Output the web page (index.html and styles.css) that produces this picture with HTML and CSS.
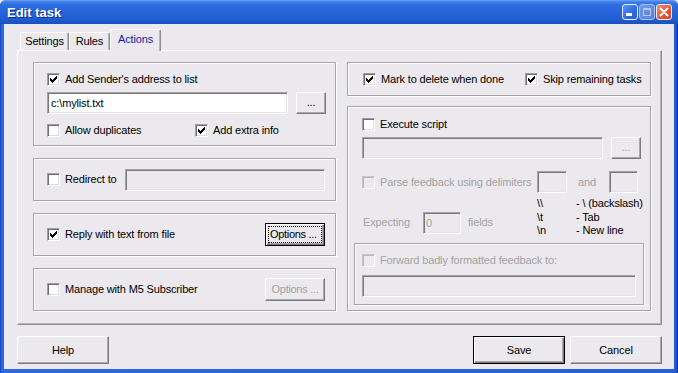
FILE: index.html
```html
<!DOCTYPE html>
<html>
<head>
<meta charset="utf-8">
<link rel="stylesheet" href="styles.css">
</head>
<body>
<div class="window">
  <div class="titlebar">
    <span class="title">Edit task</span>
    <div class="tb-buttons">
      <span class="tb-btn tb-min"><span class="min-bar"></span></span>
      <span class="tb-btn tb-max disabled"><span class="max-box"></span></span>
      <span class="tb-btn tb-close"><svg viewBox="0 0 16 16" width="16" height="16"><path d="M4.5 4.5l7 7M11.5 4.5l-7 7" stroke="#fff" stroke-width="2" stroke-linecap="round"/></svg></span>
    </div>
  </div>
  <div class="client">
    <div class="tabs">
      <div class="tab tab-settings">Settings</div>
      <div class="tab tab-rules">Rules</div>
      <div class="tab tab-actions active">Actions</div>
    </div>
    <div class="page">
      <div class="col col-left">
        <div class="group g-list">
          <div class="row">
            <span class="chk checked"><svg viewBox="0 0 9 9" width="9" height="9" shape-rendering="crispEdges"><path d="M1 3h1v3h-1zM2 4h1v3h-1zM3 5h1v3h-1zM4 4h1v3h-1zM5 3h1v3h-1zM6 2h1v3h-1zM7 1h1v3h-1z"/></svg></span>
            <span class="lbl">Add Sender's address to list</span>
          </div>
          <div class="row row-field">
            <div class="field w-list">c:\mylist.txt</div>
            <div class="btn btn-dots">...</div>
          </div>
          <div class="row">
            <div class="cell-dup">
              <span class="chk"></span>
              <span class="lbl">Allow duplicates</span>
            </div>
            <span class="chk checked"><svg viewBox="0 0 9 9" width="9" height="9" shape-rendering="crispEdges"><path d="M1 3h1v3h-1zM2 4h1v3h-1zM3 5h1v3h-1zM4 4h1v3h-1zM5 3h1v3h-1zM6 2h1v3h-1zM7 1h1v3h-1z"/></svg></span>
            <span class="lbl">Add extra info</span>
          </div>
        </div>
        <div class="group g-small">
          <span class="chk"></span>
          <span class="lbl">Redirect to</span>
          <div class="field w-redirect disabled"></div>
        </div>
        <div class="group g-small">
          <span class="chk checked"><svg viewBox="0 0 9 9" width="9" height="9" shape-rendering="crispEdges"><path d="M1 3h1v3h-1zM2 4h1v3h-1zM3 5h1v3h-1zM4 4h1v3h-1zM5 3h1v3h-1zM6 2h1v3h-1zM7 1h1v3h-1z"/></svg></span>
          <span class="lbl">Reply with text from file</span>
          <div class="btn btn-opt default"><span class="focus">Options ...</span></div>
        </div>
        <div class="group g-small">
          <span class="chk"></span>
          <span class="lbl">Manage with M5 Subscriber</span>
          <div class="btn btn-opt disabled-btn">Options ...</div>
        </div>
      </div>
      <div class="col col-right">
        <div class="group g-mark">
          <div class="cell-mark">
            <span class="chk checked"><svg viewBox="0 0 9 9" width="9" height="9" shape-rendering="crispEdges"><path d="M1 3h1v3h-1zM2 4h1v3h-1zM3 5h1v3h-1zM4 4h1v3h-1zM5 3h1v3h-1zM6 2h1v3h-1zM7 1h1v3h-1z"/></svg></span>
            <span class="lbl">Mark to delete when done</span>
          </div>
          <span class="chk checked"><svg viewBox="0 0 9 9" width="9" height="9" shape-rendering="crispEdges"><path d="M1 3h1v3h-1zM2 4h1v3h-1zM3 5h1v3h-1zM4 4h1v3h-1zM5 3h1v3h-1zM6 2h1v3h-1zM7 1h1v3h-1z"/></svg></span>
          <span class="lbl">Skip remaining tasks</span>
        </div>
        <div class="group g-script">
          <div class="row r-exec">
            <span class="chk"></span>
            <span class="lbl">Execute script</span>
          </div>
          <div class="row r-script">
            <div class="field disabled w-script"></div>
            <div class="btn btn-dots disabled-btn">...</div>
          </div>
          <div class="row r-parse">
            <div class="cell-parse">
              <span class="chk disabled"></span>
              <span class="lbl dim">Parse feedback using delimiters</span>
            </div>
            <div class="field disabled w-delim"></div>
            <span class="lbl dim and">and</span>
            <div class="field disabled w-delim2"></div>
          </div>
          <div class="row r-legend">
            <div class="cell-expect">
              <span class="lbl dim">Expecting</span>
              <div class="field disabled w-expect">0</div>
              <span class="lbl dim">fields</span>
            </div>
            <div class="legend">
              <span class="esc">\\</span><span>- \ (backslash)</span>
              <span class="esc">\t</span><span>- Tab</span>
              <span class="esc">\n</span><span>- New line</span>
            </div>
          </div>
          <div class="group g-forward">
            <div class="row">
              <span class="chk disabled"></span>
              <span class="lbl dim">Forward badly formatted feedback to:</span>
            </div>
            <div class="field disabled w-forward"></div>
          </div>
        </div>
      </div>
    </div>
    <div class="footer">
      <div class="btn btn-foot">Help</div>
      <div class="btn btn-foot default btn-save">Save</div>
      <div class="btn btn-foot">Cancel</div>
    </div>
  </div>
</div>
</body>
</html>
```
FILE: styles.css
```css
* { box-sizing: border-box; }
html, body { margin: 0; padding: 0; }
body {
  width: 678px;
  height: 373px;
  overflow: hidden;
  background: #ebe9ed;
  font-family: "Liberation Sans", Arial, sans-serif;
  font-size: 11px;
  letter-spacing: -0.15px;
  color: #000;
}

.window {
  width: 678px;
  height: 373px;
  display: flex;
  flex-direction: column;
  background: linear-gradient(to right, #0a35b8 0, #2660d8 1px, #2d68df 3px, #2660d8 675px, #0a35b8 678px);
  border-radius: 6px 6px 0 0;
  overflow: hidden;
}

.titlebar {
  height: 24px;
  flex: none;
  display: flex;
  align-items: center;
  padding: 0 6px 0 7px;
  background: linear-gradient(to bottom, #6fa3f2 0, #3c7ee8 2px, #2b6de2 5px, #2764da 12px, #2160d4 18px, #1c55c6 22px, #1a4fbd 24px);
}
.title {
  color: #fff;
  font-family: "Liberation Sans", Arial, sans-serif;
  font-weight: bold;
  font-size: 13px;
  letter-spacing: 0;
  text-shadow: 1px 1px 0 #0a2a8a;
}
.tb-buttons {
  margin-left: auto;
  display: flex;
  gap: 1px;
}
.tb-btn {
  width: 16px;
  height: 16px;
  border: 1px solid #e8eefc;
  border-radius: 3px;
  background: linear-gradient(135deg, #5d95f3 0%, #2d68e0 60%, #2a5fd6 100%);
  display: flex;
  align-items: flex-end;
  justify-content: flex-start;
}
.tb-btn.disabled {
  background: linear-gradient(135deg, #6f9ae8 0%, #5782dc 100%);
  border-color: #a9c0ee;
  align-items: center;
  justify-content: center;
}
.min-bar {
  width: 6px;
  height: 3px;
  background: #fff;
  margin: 0 0 3px 3px;
}
.max-box {
  width: 8px;
  height: 8px;
  border: 1px solid #b6c9f0;
  border-top-width: 2px;
}
.tb-close {
  background: linear-gradient(135deg, #f0906c 0%, #e35a36 55%, #cf4222 100%);
  align-items: center;
  justify-content: center;
}
.tb-close svg { display: block; margin: -1px; }

.client {
  flex: 1;
  margin: 0 4px 4px 4px;
  background: #ebe9ed;
  display: flex;
  flex-direction: column;
}

/* tabs */
.tabs {
  display: flex;
  align-items: flex-end;
  height: 21px;
  margin-top: 5px;
  padding-left: 16px;
}
.tab {
  height: 18px;
  padding-top: 2px;
  text-align: center;
  border-top: 1px solid #fff;
  border-left: 1px solid #fff;
  border-right: 1px solid #8e8e8e;
  box-shadow: inset -1px 0 #b8b8b8;
  border-radius: 2px 2px 0 0;
  background: #ebe9ed;
}
.tab-settings { width: 49px; }
.tab-rules { width: 41px; }
.tab-actions {
  width: 51px;
  height: 22px;
  margin-bottom: -1px;
  padding-top: 3px;
  color: #1b1ba6;
  position: relative;
  z-index: 1;
}

.page {
  margin-left: 13px;
  width: 645px;
  height: 275px;
  border-top: 1px solid #fff;
  border-left: 1px solid #fff;
  border-right: 1px solid #8e8e8e;
  border-bottom: 1px solid #8e8e8e;
  box-shadow: inset -1px -1px #b4b4b4;
  padding: 11px 0 0 15px;
  display: flex;
  gap: 11px;
  align-items: flex-start;
}

.col { display: flex; flex-direction: column; }
.col-left { width: 303px; gap: 12px; }
.col-right { width: 304px; gap: 10px; }

.group {
  border: 1px solid #a5a5a5;
  box-shadow: inset 1px 1px #fff, 1px 1px 0 #fff;
}

.row { display: flex; align-items: center; }

.chk {
  width: 13px;
  height: 13px;
  flex: none;
  background: #fff;
  border: 1px solid;
  border-color: #a0a0a0 #fff #fff #a0a0a0;
  box-shadow: inset 1px 1px #6f6f6f, inset -1px -1px #dcdcdc;
  display: flex;
  align-items: center;
  justify-content: center;
}
.chk svg { display: block; fill: #000; }
.chk.disabled { background: #ebe9ed; border-color: #c4c4c4 #fff #fff #c4c4c4; box-shadow: inset 1px 1px #b8b8b8; }
.lbl { margin-left: 5px; white-space: nowrap; line-height: 13px; }
.dim { color: #a3a3a3; }

.field {
  height: 22px;
  background: #fff;
  border: 1px solid;
  border-color: #a3a3a3 #fff #fff #a3a3a3;
  box-shadow: inset 1px 1px #7a7a7a, inset -1px -1px #e4e4e4;
  padding: 4px 0 0 3px;
  line-height: 13px;
  white-space: nowrap;
}
.field.disabled { background: #ebe9ed; color: #a3a3a3; }

.btn {
  background: #ebe9ed;
  border: 1px solid;
  border-color: #fff #7a7a7a #7a7a7a #fff;
  box-shadow: inset -1px -1px #a8a8a8;
  display: flex;
  align-items: center;
  justify-content: center;
  line-height: 13px;
  white-space: nowrap;
}
.btn.default {
  border-color: #000;
  box-shadow: inset 1px 1px #fff, inset -1px -1px #7a7a7a, inset -2px -2px #a8a8a8;
}
.disabled-btn { color: #a3a3a3; }
.btn-opt { letter-spacing: -0.3px; }
.focus {
  flex: none;
  border: 1px dotted #000;
  padding: 1px 0 0 1px;
  height: 17px;
  width: 54px;
  line-height: 13px;
  text-align: left;
  overflow: visible;
}

/* group 1 */
.g-list { height: 84px; padding: 10px 0 0 13px; }
.g-list .row-field { margin-top: 6px; }
.w-list { width: 241px; }
.btn-dots { width: 30px; height: 22px; margin-left: 8px; padding-bottom: 2px; }
.g-list .row:last-child { margin-top: 10px; }
.cell-dup { width: 148px; display: flex; align-items: center; }

.g-small {
  height: 43px;
  display: flex;
  align-items: center;
  padding: 0 10px 0 13px;
}
.w-redirect { width: 200px; margin-left: auto; }
.btn-opt { width: 60px; height: 23px; margin-left: auto; }

/* right */
.g-mark {
  height: 34px;
  display: flex;
  align-items: center;
  padding-left: 15px;
}
.cell-mark { width: 162px; display: flex; align-items: center; }

.g-script {
  height: 205px;
  padding: 11px 6px 0 6px;
}
.g-script > .row { margin-left: 8px; }
.r-script { margin-top: 6px; }
.w-script { width: 241px; }
.r-parse { margin-top: 12px; }
.cell-parse { width: 175px; display: flex; align-items: center; }
.w-delim { width: 30px; }
.and { margin: 0 0 0 11px; width: 31px; }
.w-delim2 { width: 29px; }
.r-legend { margin-top: 4px; align-items: flex-end; }
.cell-expect { width: 175px; display: flex; align-items: center; margin-bottom: 4px; padding-left: 1px; }
.cell-expect .lbl:first-child { margin-left: 0; }
.w-expect { width: 38px; margin-left: 13px; padding-left: 2px; }
.cell-expect .lbl:last-child { margin-left: 7px; }
.legend {
  display: grid;
  grid-template-columns: 39px auto;
  line-height: 13.5px;
}
.g-forward {
  margin-top: 5px;
  height: 62px;
  padding: 10px 0 0 7px;
}
.w-forward { width: 274px; margin-top: 8px; }

/* footer */
.footer {
  display: flex;
  margin-top: 11px;
  padding: 0 12px 0 13px;
  gap: 5px;
}
.btn-foot { width: 92px; height: 28px; }
.btn-save { margin-left: auto; }
```
